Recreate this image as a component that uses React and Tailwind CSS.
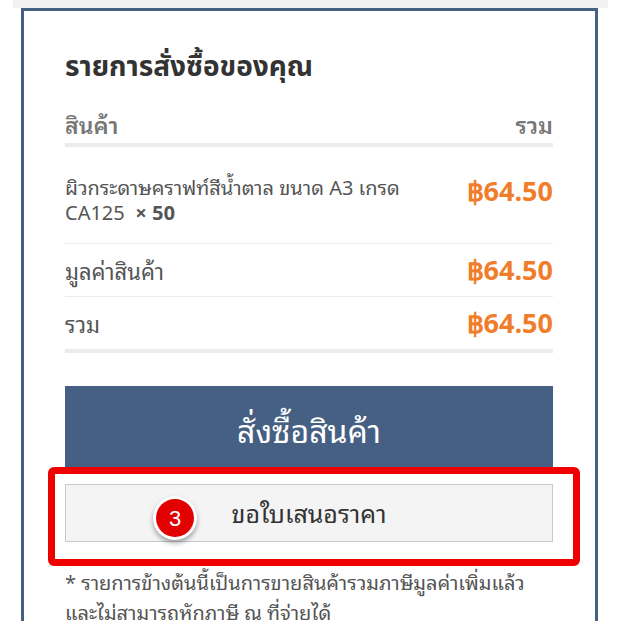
const THAI = { fontFamily: '"Noto Sans Thai Looped", "Noto Sans Thai", "Noto Sans", Tahoma, sans-serif' }
const TITLE = { fontFamily: '"Noto Sans Thai", "Noto Sans", sans-serif' }
const PRICE = { fontFamily: '"Open Sans", "Noto Sans", sans-serif' }

function Price() {
  return (
    <span className="text-[27px] leading-[34px] font-bold text-[#f07d2a]" style={PRICE}>฿64.50</span>
  )
}

export default function App() {
  return (
    <div className="relative w-[621px] h-[621px] overflow-hidden bg-white" style={THAI}>
      <div className="h-2 mx-[13px] bg-[#f2f2f2]" />

      <div className="ml-[21px] w-[577px] h-[620px] border-[3px] border-b-0 border-[#46607f] pl-[41px] pr-[42px] pt-[41px]">
        <h2 className="h-[32px] leading-[32px] text-[28px] font-bold text-[#333]" style={TITLE}>รายการสั่งซื้อของคุณ</h2>

        <div className="mt-[25px] flex justify-between h-[30px] leading-[30px] text-[23px] font-semibold text-[#777]">
          <span>สินค้า</span>
          <span>รวม</span>
        </div>
        <div className="mt-1 h-1 bg-[#ebebeb]" />

        <div className="flex justify-between items-start pt-[27px] h-[97px] border-b border-[#ececec]">
          <p className="w-[400px] text-[20px] leading-[25px] text-[#555]">
            ผิวกระดาษคราฟท์สีน้ำตาล ขนาด A3 เกรด CA125&nbsp; <span className="font-bold">× 50</span>
          </p>
          <Price />
        </div>

        <div className="flex items-center justify-between h-[53px] border-b border-[#ececec]">
          <span className="text-[22px] text-[#555]">มูลค่าสินค้า</span>
          <Price />
        </div>
        <div className="flex items-center justify-between h-[52px]">
          <span className="text-[22px] text-[#555]">รวม</span>
          <Price />
        </div>
        <div className="h-1 bg-[#ebebeb]" />

        <button className="mt-[33px] w-full h-[86px] bg-[#466084] text-white text-[32px]">
          สั่งซื้อสินค้า
        </button>

        <button className="mt-3 w-full h-[58px] bg-[#f4f4f4] border border-[#c8c8c8] text-[25px] text-[#333]">
          ขอใบเสนอราคา
        </button>

        <p className="mt-[24px] text-[20px] leading-[30px] text-[#555] whitespace-nowrap">
          * รายการข้างต้นนี้เป็นการขายสินค้ารวมภาษีมูลค่าเพิ่มแล้ว
          <br />
          และไม่สามารถหักภาษี ณ ที่จ่ายได้
        </p>
      </div>

      {/* annotation overlay */}
      <div className="absolute left-[48px] top-[467px] w-[532px] h-[99px] border-[7px] border-[#ee0000] rounded-[6px]" />
      <div className="absolute left-[153px] top-[496px] w-[44px] h-[44px] rounded-full bg-white shadow-[0_3px_5px_rgba(0,0,0,0.35)] flex items-center justify-center">
        <div className="w-[38px] h-[38px] rounded-full bg-[#e30000] flex items-center justify-center text-white text-[22px]" style={{ fontFamily: '"Liberation Sans", Arial, sans-serif' }}>
          3
        </div>
      </div>
    </div>
  )
}
